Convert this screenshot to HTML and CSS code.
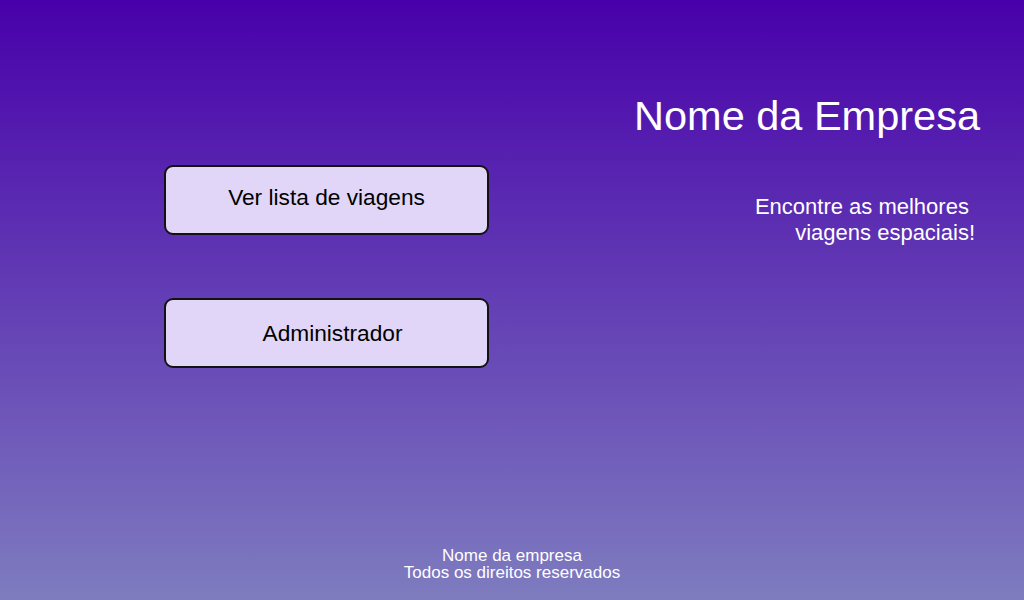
FILE: index.html
```html
<!DOCTYPE html>
<html lang="pt">
<head>
<meta charset="utf-8">
<title>Nome da Empresa</title>
<link rel="stylesheet" href="styles.css">
</head>
<body>
<div class="page">
  <main class="main">
    <nav class="actions">
      <button class="btn btn-list" type="button">Ver lista de viagens</button>
      <button class="btn btn-admin" type="button">Administrador</button>
    </nav>
    <header class="brand">
      <h1 class="brand-title">Nome da Empresa</h1>
      <p class="brand-tagline">Encontre as melhores&nbsp;<br>viagens espaciais!</p>
    </header>
  </main>
  <footer class="footer">
    <p class="footer-text">Nome da empresa<br>Todos os direitos reservados</p>
  </footer>
</div>
</body>
</html>
```

FILE: styles.css
```css
html, body {
  margin: 0;
  padding: 0;
  height: 100%;
}

body {
  font-family: "Liberation Sans", Arial, sans-serif;
  background: linear-gradient(to bottom, #4800aa 0%, #7e7cbf 100%);
  color: #fff;
}

.page {
  min-height: 100vh;
  display: flex;
  flex-direction: column;
}

.main {
  flex: 1;
  display: flex;
  justify-content: space-between;
}

.actions {
  display: flex;
  flex-direction: column;
  gap: 63px;
  padding-left: 164px;
  padding-top: 165px;
}

.btn {
  box-sizing: border-box;
  width: 325px;
  height: 70px;
  display: flex;
  align-items: center;
  justify-content: center;
  background: #e1d6f8;
  color: #000;
  border: 2px solid #121212;
  border-radius: 9px;
  font-family: "Liberation Sans", Arial, sans-serif;
  font-size: 22.7px;
  padding: 0 0 6px 0;
  cursor: pointer;
}

.btn-admin {
  padding: 0 0 0 12px;
}

.brand {
  text-align: right;
  padding-right: 44px;
  padding-top: 92px;
}

.brand-title {
  margin: 0;
  font-size: 41.5px;
  font-weight: normal;
  line-height: normal;
}

.brand-tagline {
  margin: 54px 5px 0 0;
  font-size: 22px;
  line-height: normal;
}

.footer {
  text-align: center;
  padding-bottom: 19px;
}

.footer-text {
  margin: 0;
  font-size: 17px;
  line-height: 17px;
}
```
